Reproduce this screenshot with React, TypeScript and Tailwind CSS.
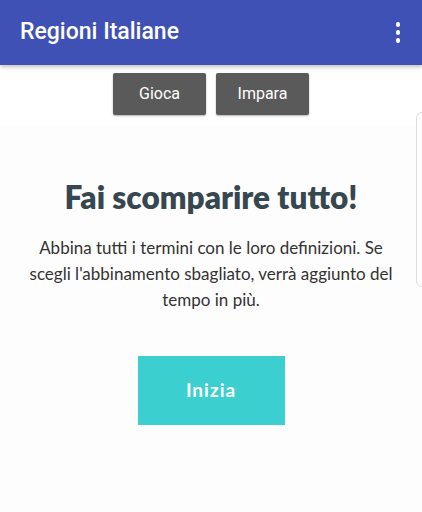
export default function App() {
  return (
    <div className="relative h-[512px] w-[422px] overflow-hidden bg-[#fdfdfd] font-['Lato',sans-serif]">
      {/* app bar */}
      <header className="relative z-10 flex h-[65px] items-center justify-between bg-[#3f51b5] pl-5 pr-[22px] shadow-[0_2px_4px_rgba(0,0,0,0.25)]">
        <h1 className="font-['Roboto',sans-serif] text-[23px] font-medium text-white">Regioni Italiane</h1>
        <div className="flex flex-col gap-[3.5px]">
          <span className="h-[4.5px] w-[4.5px] rounded-full bg-white" />
          <span className="h-[4.5px] w-[4.5px] rounded-full bg-white" />
          <span className="h-[4.5px] w-[4.5px] rounded-full bg-white" />
        </div>
      </header>

      {/* tabs */}
      <div className="flex h-[60px] justify-center gap-[10px] bg-white pt-2">
        <button className="h-[42px] w-[93px] rounded-[2px] bg-[#5a5a5a] font-['Roboto',sans-serif] text-[16px] text-white shadow-[0_1px_2px_rgba(0,0,0,0.3)]">
          Gioca
        </button>
        <button className="h-[42px] w-[93px] rounded-[2px] bg-[#5a5a5a] font-['Roboto',sans-serif] text-[16px] text-white shadow-[0_1px_2px_rgba(0,0,0,0.3)]">
          Impara
        </button>
      </div>

      {/* side card edge */}
      <div className="absolute left-[416px] top-[112px] h-[175px] w-[20px] rounded-l-[6px] border border-[#dcdcdc] bg-white" />

      {/* content */}
      <main className="flex flex-col items-center px-4 pt-[53px]">
        <h2 className="text-[31.5px] font-extrabold leading-[38px] text-[#37474f]">Fai scomparire tutto!</h2>
        <p className="mt-[19px] max-w-[378px] text-center text-[17px] leading-[26px] text-[#333333]">
          Abbina tutti i termini con le loro definizioni. Se scegli l'abbinamento sbagliato, verrà aggiunto del tempo in più.
        </p>
        <button className="mt-[43px] h-[69px] w-[147px] bg-[#3ccfcf] text-[19px] font-bold tracking-[1px] text-white">
          Inizia
        </button>
      </main>
    </div>
  );
}
